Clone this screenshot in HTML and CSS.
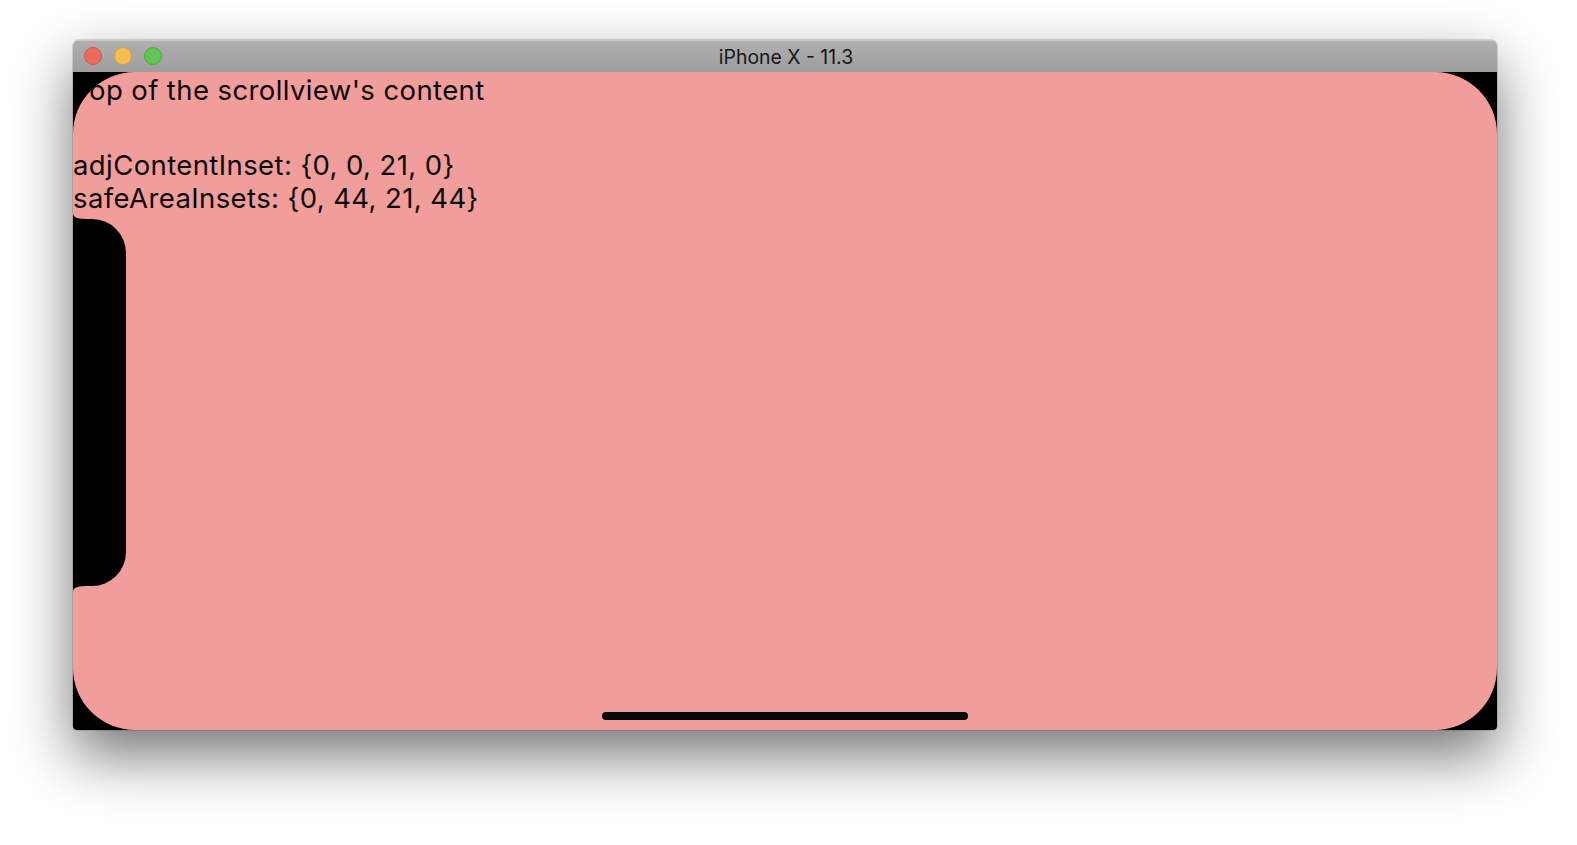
FILE: index.html
```html
<!DOCTYPE html>
<html>
<head>
<meta charset="utf-8">
<link rel="stylesheet" href="styles.css">
</head>
<body>
<div class="window">
  <div class="titlebar">
    <div class="lights">
      <span class="light red"></span>
      <span class="light yellow"></span>
      <span class="light green"></span>
    </div>
    <div class="title">iPhone X - 11.3</div>
  </div>
  <div class="screen">
    <div class="display">
      <div class="content">
        <div class="label top-label">
          <div class="line">Top of the scrollview's content</div>
        </div>
        <div class="label inset-label">
          <div class="line">adjContentInset: {0, 0, 21, 0}</div>
          <div class="line">safeAreaInsets: {0, 44, 21, 44}</div>
        </div>
      </div>
      <div class="home-bar"></div>
    </div>
    <svg class="notch" width="53" height="379" viewBox="0 0 53 379">
      <path d="M0,0 C0,5 5,6 17,6 L19,6 A34,34 0 0 1 53,40 L53,339 A34,34 0 0 1 19,373 L17,373 C5,373 0,374 0,379 Z" fill="#000"/>
    </svg>
  </div>
</div>
</body>
</html>
```

FILE: styles.css
```css
html, body {
  margin: 0;
  padding: 0;
  background: #ffffff;
}
body {
  padding: 40px 0 0 73px;
  width: 1577px;
  height: 845px;
  box-sizing: border-box;
  overflow: hidden;
}
.window {
  width: 1424px;
  height: 690px;
  border-radius: 6px 6px 4px 4px;
  overflow: hidden;
  display: flex;
  flex-direction: column;
  box-shadow: 0 25px 60px rgba(0, 0, 0, 0.55), 0 0 0 1px rgba(0, 0, 0, 0.12);
}
.titlebar {
  height: 32px;
  flex: none;
  position: relative;
  display: flex;
  align-items: center;
  justify-content: center;
  background: linear-gradient(#b0b0b0, #9d9d9d);
  box-shadow: inset 0 1px 0 #c9c9c9;
}
.lights {
  position: absolute;
  left: 11px;
  top: 7px;
  display: flex;
  gap: 12px;
}
.light {
  width: 18px;
  height: 18px;
  border-radius: 50%;
  box-sizing: border-box;
}
.red { background: #ed6a5e; border: 1px solid #d65447; }
.yellow { background: #f5bf4f; border: 1px solid #d9a33a; }
.green { background: #61c554; border: 1px solid #4ea83f; }
.title {
  font-family: Inter, "Liberation Sans", sans-serif;
  font-size: 19.4px;
  color: #161616;
  padding-left: 2px;
  padding-top: 1px;
}
.screen {
  flex: 1;
  background: #000;
  position: relative;
}
.display {
  position: absolute;
  inset: 0;
  background: #f09d9b;
  border-radius: 62px;
  overflow: hidden;
  display: flex;
  flex-direction: column;
  justify-content: space-between;
  align-items: center;
}
.content {
  align-self: stretch;
  font-family: Inter, "Liberation Sans", sans-serif;
  font-size: 27.5px;
  letter-spacing: 0.4px;
  line-height: 33.5px;
  color: #0a0a0a;
  padding-top: 2px;
}
.inset-label {
  margin-top: 41px;
}
.home-bar {
  width: 366px;
  height: 8px;
  border-radius: 4px;
  background: #080808;
  margin-bottom: 10px;
}
.notch {
  position: absolute;
  left: 0;
  top: 141px;
  display: block;
}
```
